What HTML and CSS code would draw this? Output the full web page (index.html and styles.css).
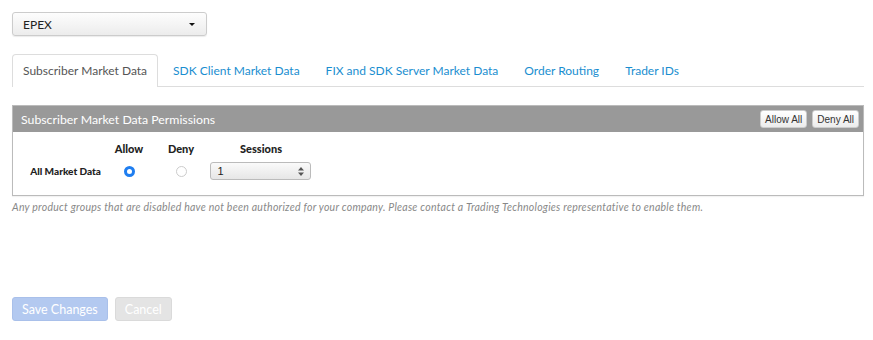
FILE: index.html
```html
<!DOCTYPE html>
<html lang="en">
<head>
    <meta charset="UTF-8">
    <title>Market Data Permissions</title>
    <link rel="stylesheet" href="styles.css">
</head>
<body>
    <div class="exchange-select">
        <span>EPEX</span>
        <span class="caret"></span>
    </div>

    <ul class="tabs">
        <li class="tab active">Subscriber Market Data</li>
        <li class="tab">SDK Client Market Data</li>
        <li class="tab">FIX and SDK Server Market Data</li>
        <li class="tab">Order Routing</li>
        <li class="tab">Trader IDs</li>
    </ul>

    <div class="panel">
        <div class="panel-header">
            <span class="panel-title">Subscriber Market Data Permissions</span>
            <div class="panel-actions">
                <button class="mini-btn">Allow All</button>
                <button class="mini-btn">Deny All</button>
            </div>
        </div>
        <div class="perm-grid">
            <div></div>
            <div class="col-head">Allow</div>
            <div class="col-head">Deny</div>
            <div class="col-head">Sessions</div>

            <div class="row-label">All Market Data</div>
            <div class="cell"><span class="radio checked"></span></div>
            <div class="cell"><span class="radio"></span></div>
            <div class="cell">
                <div class="session-select">
                    <span>1</span>
                    <svg width="6" height="9" viewBox="0 0 6 9">
                        <path d="M3 0 L6 3.5 L0 3.5 Z M0 5.5 L6 5.5 L3 9 Z" fill="#555"/>
                    </svg>
                </div>
            </div>
        </div>
    </div>
    <p class="note">Any product groups that are disabled have not been authorized for your company. Please contact a Trading Technologies representative to enable them.</p>

    <div class="form-actions">
        <button class="btn btn-primary">Save Changes</button>
        <button class="btn btn-default">Cancel</button>
    </div>
</body>
</html>
```

FILE: styles.css
```css
body {
    margin: 0;
    padding: 12px 9px 12px 12px;
    font-family: Lato, "Open Sans", sans-serif;
    color: #333;
    background: #fff;
}

.exchange-select {
    width: 195px;
    height: 24px;
    box-sizing: border-box;
    display: flex;
    align-items: center;
    justify-content: space-between;
    padding: 0 10px 0 10px;
    border: 1px solid #ccc;
    border-radius: 3px;
    background: linear-gradient(#fdfdfd, #ececec);
    box-shadow: 0 1px 1px rgba(0,0,0,0.08);
    font-size: 12px;
    color: #222;
}

.caret {
    width: 0;
    height: 0;
    border-left: 3px solid transparent;
    border-right: 3px solid transparent;
    border-top: 3px solid #111;
    margin-right: 1px;
}

.tabs {
    list-style: none;
    margin: 18px 0 0 0;
    padding: 0;
    display: flex;
    border-bottom: 1px solid #ddd;
    height: 32px;
}

.tab {
    padding: 0 10px;
    margin-right: 4px;
    line-height: 32px;
    font-size: 12px;
    color: #1a8ed0;
    border: 1px solid transparent;
    border-bottom: none;
    border-radius: 4px 4px 0 0;
}

.tab.active {
    color: #555;
    background: #fff;
    border-color: #ddd;
    height: 32px;
    margin-bottom: -1px;
}

.panel {
    margin-top: 18px;
    border: 1px solid #bbb;
    box-shadow: 0 1px 1px rgba(0,0,0,0.05);
}

.panel-header {
    height: 26px;
    background: #999;
    display: flex;
    align-items: center;
    justify-content: space-between;
    padding: 0 4px 0 8px;
}

.panel-title {
    color: #fff;
    font-size: 12.3px;
}

.panel-actions {
    display: flex;
    gap: 5px;
}

.mini-btn {
    height: 18px;
    padding: 0 4px;
    font-family: "Liberation Sans", Arial, sans-serif;
    font-size: 10px;
    color: #333;
    border: 1px solid #ccc;
    border-radius: 3px;
    background: linear-gradient(#fff, #ececec);
}

.perm-grid {
    display: grid;
    grid-template-columns: 92px 48px 56px 104px;
    grid-template-rows: 16px 18px;
    row-gap: 6px;
    padding: 8px 0 15px 0;
    align-items: center;
}

.col-head {
    font-size: 11px;
    font-weight: 900;
    color: #222;
    text-align: center;
}

.row-label {
    font-size: 10px;
    font-weight: 900;
    color: #222;
    text-align: right;
    padding-right: 4px;
}

.cell {
    display: flex;
    justify-content: center;
}

.radio {
    width: 11px;
    height: 11px;
    box-sizing: border-box;
    border-radius: 50%;
    border: 1px solid #ccc;
    background: #fff;
}

.radio.checked {
    border: 3px solid #1f7ef0;
    background: #fff;
}

.session-select {
    width: 101px;
    height: 18px;
    box-sizing: border-box;
    display: flex;
    align-items: center;
    justify-content: space-between;
    padding: 0 6px 0 7px;
    margin-left: -2px;
    border: 1px solid #bbb;
    border-radius: 3px;
    background: linear-gradient(#fafafa, #e6e6e6);
    font-family: "Liberation Sans", Arial, sans-serif;
    font-size: 11px;
    color: #222;
}

.note {
    margin: 5px 0 0 0;
    font-size: 10.5px;
    letter-spacing: 0.25px;
    font-style: italic;
    color: #888;
}

.form-actions {
    margin-top: 84px;
    display: flex;
    gap: 7px;
}

.btn {
    height: 24px;
    padding: 0 9px;
    border-radius: 3px;
    font-family: Lato, "Open Sans", sans-serif;
    font-size: 12.5px;
    color: #fff;
}

.btn-primary {
    background: #b3c9f0;
    border: 1px solid #a9c0ea;
}

.btn-default {
    background: #e4e4e4;
    border: 1px solid #dadada;
}
```
